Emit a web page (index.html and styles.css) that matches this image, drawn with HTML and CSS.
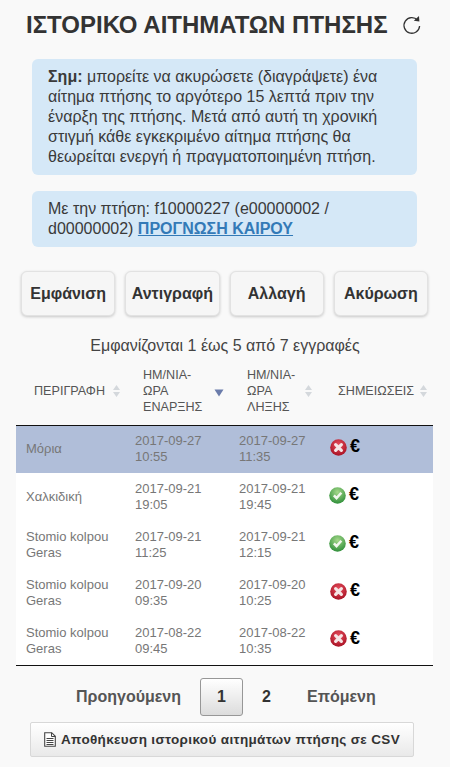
FILE: index.html
```html
<!DOCTYPE html>
<html lang="el">
<head>
<meta charset="utf-8">
<title>Ιστορικό αιτημάτων πτήσης</title>
<link rel="stylesheet" href="styles.css">
</head>
<body>
<svg class="defs" width="0" height="0" aria-hidden="true">
  <defs>
    <radialGradient id="gr" cx="50%" cy="35%" r="65%"><stop offset="0" stop-color="#e8505f"/><stop offset="1" stop-color="#a81224"/></radialGradient>
    <radialGradient id="gg" cx="50%" cy="30%" r="70%"><stop offset="0" stop-color="#a5d88a"/><stop offset="1" stop-color="#2f8f3a"/></radialGradient>
    <symbol id="no" viewBox="0 0 16 16"><circle cx="8" cy="8" r="7.8" fill="url(#gr)"/><path d="M5.3 5.3l5.4 5.4M10.7 5.3l-5.4 5.4" stroke="#f6e6e6" stroke-width="3" stroke-linecap="round"/></symbol>
    <symbol id="yes" viewBox="0 0 16 16"><circle cx="8" cy="8" r="7.8" fill="url(#gg)"/><path d="M4.6 7.8l2.5 2.6 4.5-5" fill="none" stroke="#f2f7ee" stroke-width="2.4"/></symbol>
    <symbol id="sort" viewBox="0 0 9 14"><path d="M4.5 1l3.5 5H1zM4.5 13L1 8h7z" fill="#d4d8dc"/></symbol>
  </defs>
</svg>
<main class="page">
  <header class="title-row">
    <h1>ΙΣΤΟΡΙΚΟ ΑΙΤΗΜΑΤΩΝ ΠΤΗΣΗΣ</h1>
    <svg class="refresh" width="20" height="20" viewBox="0 0 20 20"><path d="M15.6 5.2A7.8 7.8 0 1 0 17.6 11" fill="none" stroke="#333" stroke-width="1.3"/><path d="M11.8 5.8l5.6.6-.4-5.4z" fill="#333"/></svg>
  </header>
  <section class="note note-main"><strong>Σημ:</strong> μπορείτε να ακυρώσετε (διαγράψετε) ένα αίτημα πτήσης το αργότερο 15 λεπτά πριν την έναρξη της πτήσης. Μετά από αυτή τη χρονική στιγμή κάθε εγκεκριμένο αίτημα πτήσης θα θεωρείται ενεργή ή πραγματοποιημένη πτήση.</section>
  <section class="note note-flight">Με την πτήση: f10000227 (e00000002 / d00000002) <a href="#">ΠΡΟΓΝΩΣΗ ΚΑΙΡΟΥ</a></section>
  <div class="actions">
    <button class="action">Εμφάνιση</button>
    <button class="action">Αντιγραφή</button>
    <button class="action">Αλλαγή</button>
    <button class="action">Ακύρωση</button>
  </div>
  <p class="info">Εμφανίζονται 1 έως 5 από 7 εγγραφές</p>
  <table class="grid">
    <colgroup><col class="c1"><col class="c2"><col class="c3"><col class="c4"></colgroup>
    <thead>
      <tr>
        <th><span class="th-in th-first">ΠΕΡΙΓΡΑΦΗ<svg class="sort" width="9" height="14"><use href="#sort"/></svg></span></th>
        <th><span class="th-in"><span class="th-label th-label-start">ΗΜ/ΝΙΑ-<br>ΩΡΑ<br>ΕΝΑΡΞΗΣ</span><svg class="sort-down" width="10" height="8" viewBox="0 0 10 8"><path d="M5 7.5L.5 .5h9z" fill="#6b7cab"/></svg></span></th>
        <th><span class="th-in"><span class="th-label th-label-end">ΗΜ/ΝΙΑ-<br>ΩΡΑ<br>ΛΗΞΗΣ</span><svg class="sort" width="9" height="14"><use href="#sort"/></svg></span></th>
        <th><span class="th-in">ΣΗΜΕΙΩΣΕΙΣ<svg class="sort" width="9" height="14"><use href="#sort"/></svg></span></th>
      </tr>
    </thead>
    <tbody>
      <tr class="selected"><td>Μόρια</td><td>2017-09-27<br>10:55</td><td>2017-09-27<br>11:35</td><td><span class="marks"><svg class="st" width="17" height="17"><use href="#no"/></svg><b>€</b></span></td></tr>
      <tr><td>Χαλκιδική</td><td>2017-09-21<br>19:05</td><td>2017-09-21<br>19:45</td><td><span class="marks ok"><svg class="st" width="17" height="17"><use href="#yes"/></svg><b>€</b></span></td></tr>
      <tr><td>Stomio kolpou<br>Geras</td><td>2017-09-21<br>11:25</td><td>2017-09-21<br>12:15</td><td><span class="marks ok"><svg class="st" width="17" height="17"><use href="#yes"/></svg><b>€</b></span></td></tr>
      <tr><td>Stomio kolpou<br>Geras</td><td>2017-09-20<br>09:35</td><td>2017-09-20<br>10:25</td><td><span class="marks"><svg class="st" width="17" height="17"><use href="#no"/></svg><b>€</b></span></td></tr>
      <tr><td>Stomio kolpou<br>Geras</td><td>2017-08-22<br>09:45</td><td>2017-08-22<br>10:35</td><td><span class="marks"><svg class="st" width="17" height="17"><use href="#no"/></svg><b>€</b></span></td></tr>
    </tbody>
  </table>
  <nav class="pager">
    <a class="pg prev" href="#">Προηγούμενη</a>
    <a class="pg current" href="#">1</a>
    <a class="pg num" href="#">2</a>
    <a class="pg next" href="#">Επόμενη</a>
  </nav>
  <button class="csv">
    <svg width="12" height="15" viewBox="0 0 12 15"><path d="M.7.7h7l3.6 3.6v10H.7z" fill="#fff" stroke="#444" stroke-width="1.1"/><path d="M7.5.7v3.8h3.8" fill="none" stroke="#444"/><path d="M2.5 6.5h7M2.5 8.5h7M2.5 10.5h7M2.5 12.5h7" stroke="#444"/></svg>
    Αποθήκευση ιστορικού αιτημάτων πτήσης σε CSV
  </button>
</main>
</body>
</html>
```
FILE: styles.css
```css
* { box-sizing: border-box; }
html, body { margin: 0; padding: 0; }
body {
  background: #f9f9f9;
  color: #333;
  font-family: "Liberation Sans", Arial, sans-serif;
  font-size: 16px;
  width: 450px;
  height: 767px;
  overflow: hidden;
}
.defs { position: absolute; }
.page { padding-top: 8px; }
.title-row {
  display: flex;
  align-items: center;
  height: 33px;
  padding-left: 26px;
  gap: 14px;
}
h1 {
  margin: 0;
  font-size: 24px;
  font-weight: 700;
  line-height: 33px;
  white-space: nowrap;
}
.note {
  margin: 0 33px 16px 32px;
  background: #d5e8f7;
  border-radius: 6px;
  padding: 8px 16px;
  font-size: 16px;
  line-height: 20px;
  color: #3a3a3a;
}
.note-main { margin-top: 18px; height: 116px; }
.note-flight { height: 56px; margin-bottom: 24px; }
.note a { color: #337ab7; font-weight: 700; }
.actions {
  display: flex;
  gap: 10px;
  padding: 0 22px 0 21px;
}
.action {
  flex: 1 1 0;
  height: 45px;
  padding: 0;
  background: #f6f6f6;
  border: 1px solid #e2e2e2;
  border-radius: 6px;
  box-shadow: 0 1px 3px rgba(0,0,0,.2);
  font: 700 16px "Liberation Sans", Arial, sans-serif;
  color: #333;
}
.info {
  margin: 20px 0 0;
  text-align: center;
  line-height: 20px;
  font-size: 16px;
  color: #444;
}
.grid {
  table-layout: fixed;
  border-collapse: collapse;
  width: 417px;
  margin: 7px 0 0 16px;
  font-size: 13px;
  line-height: 16px;
  color: #777;
}
.c1 { width: 109px; }
.c2 { width: 104px; }
.c3 { width: 91px; }
.c4 { width: 113px; }
.grid th {
  height: 62px;
  padding: 0 0 5px 18px;
  font-weight: 400;
  text-align: left;
  border-bottom: 1px solid #111;
  color: #555;
  font-size: 12.6px;
}
.th-in { display: flex; align-items: center; gap: 5px; }
.th-first { gap: 7px; }
.th-label { flex: none; line-height: 16px; }
.th-label-start { width: 64px; }
.th-label-end { width: 52px; }
.sort { flex: none; }
.sort-down { flex: none; margin-top: 4px; margin-left: 2px; }
.grid tbody tr { background: #fff; height: 48px; }
.grid tbody tr.selected { background: #b0bed9; }
.grid td { padding: 0 0 0 10px; vertical-align: middle; }
.marks { display: flex; align-items: center; gap: 3px; margin-top: -4px; }
.marks.ok { margin-left: -1px; }
.marks b { color: #000; font-size: 18px; font-weight: 700; line-height: 16px; margin-top: -2px; }
.st { flex: none; }
.grid tbody tr:last-child td { border-bottom: 1px solid #111; }
.pager {
  display: flex;
  align-items: center;
  margin-top: 12px;
  padding-left: 76px;
  height: 38px;
  font-weight: 700;
  font-size: 16px;
}
.pg { color: #555; text-decoration: none; }
.pg.prev { width: 124px; }
.pg.current {
  width: 43px;
  height: 38px;
  line-height: 36px;
  text-align: center;
  color: #333;
  border: 1px solid #979797;
  border-radius: 3px;
  background: linear-gradient(#fff, #dcdcdc);
}
.pg.num { width: 47px; text-align: center; color: #333; }
.pg.next { margin-left: 17px; }
.csv {
  display: flex;
  align-items: center;
  justify-content: center;
  gap: 5px;
  margin: 6px 0 0 30px;
  width: 384px;
  height: 35px;
  padding: 0;
  background: linear-gradient(#fff, #e9e9e9);
  border: 1px solid #d8d8d8;
  border-radius: 2px;
  font: 700 13.5px "Liberation Sans", Arial, sans-serif;
  letter-spacing: 0.35px;
  color: #333;
}
```
